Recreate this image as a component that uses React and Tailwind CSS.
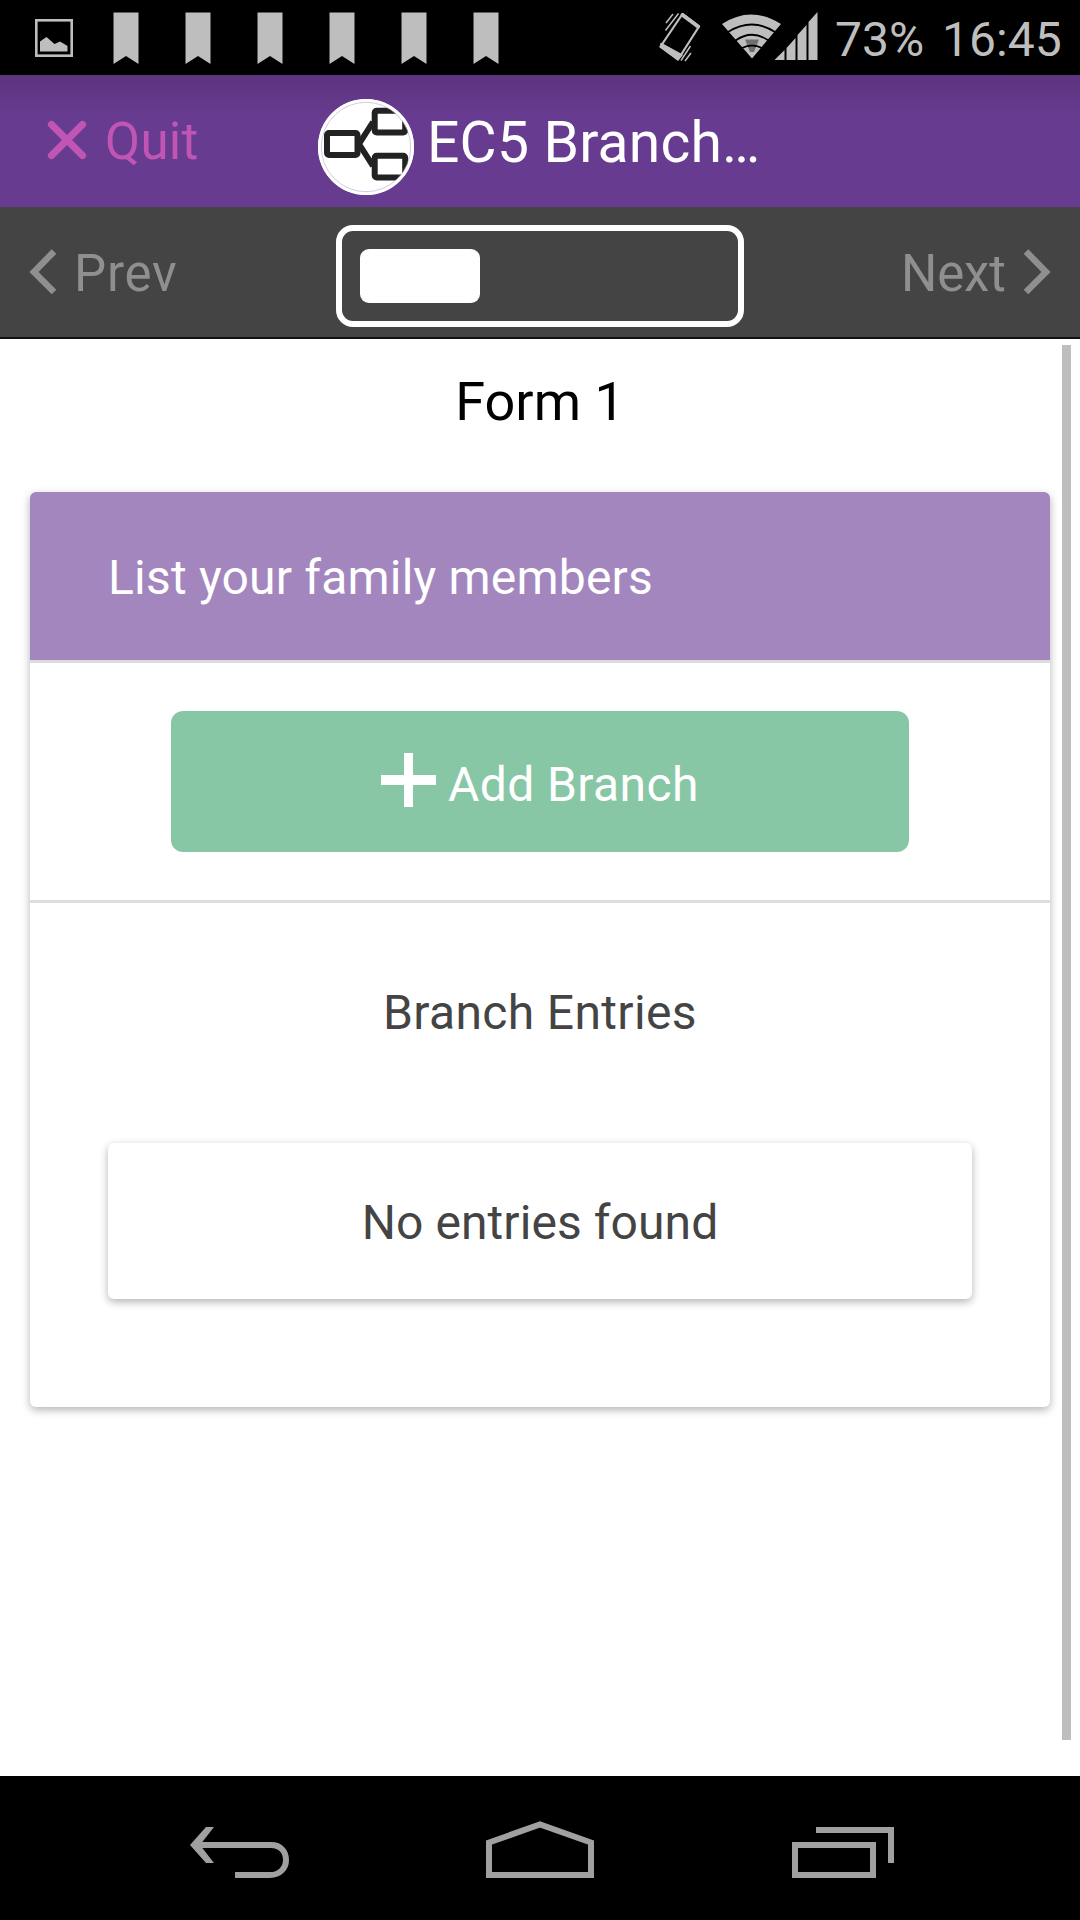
const FLAGS = [0, 1, 2, 3, 4, 5];

function StatusBar() {
  return (
    <div className="flex h-[75px] shrink-0 items-start bg-black text-[#bebebe]">
      <svg className="mt-[19px] ml-[35px] h-[38px] w-[38px]" viewBox="0 0 38 38" fill="none">
        <rect x="1.3" y="1.3" width="35.4" height="35.4" stroke="currentColor" strokeWidth="2.6" />
        <path d="M5 32.5V22.5L11.5 18L19.5 25L25 22.5L32.5 27V32.5Z" fill="currentColor" />
      </svg>
      <div className="mt-[12px] ml-[40px] flex gap-[46px]">
        {FLAGS.map((n) => (
          <svg key={n} className="h-[54px] w-[26px]" viewBox="0 0 26 54">
            <path d="M0.5 0.5H25.5V52L13 44L0.5 52Z" fill="currentColor" />
          </svg>
        ))}
      </div>
      <svg className="mt-[12px] ml-[160px] h-[51px] w-[42px]" viewBox="0 0 42 51" fill="none" stroke="currentColor">
        <path d="M23.5 2L40 14.5L19 47.5L1.5 34.5Z" strokeWidth="2.2" strokeLinejoin="round" />
        <path d="M2 31.5L23 43L19 47.500L1.500 35Z" fill="currentColor" strokeWidth="1.500" strokeLinejoin="round" />
        <path d="M23.500 3L39 14.500" strokeWidth="4" strokeLinecap="round" />
        <path d="M7 11L14 2M6.500 18.500L19.500 1.500M26 49L32 41M22 48.500L31.500 34" strokeWidth="1.500" />
      </svg>
      <svg className="mt-[12px] ml-[21px] h-[50px] w-[97px]" viewBox="0 0 97 50" fill="none">
        <path d="M0 12Q29 -7 59 12L30 46.500Z" fill="currentColor" />
        <path d="M23 27.500H37L32 40H28Z" fill="#6f6f6f" />
        <path d="M6 20Q30 5 53 20M13.500 28.500Q30 17 46.500 28.500M20 36Q30 31 40 36" stroke="#000" strokeWidth="1.800" />
        <path d="M52.500 48L62.500 38V48ZM64.500 48V36L73.500 26V48ZM75.500 48V23L84.500 13V48ZM86.500 48V10L95.500 0V48Z" fill="currentColor" />
      </svg>
      <span className="mt-[12px] ml-[16px] text-[48px] leading-[56px]">73%</span>
      <span className="mt-[12px] ml-[18px] text-[48px] leading-[56px]">16:45</span>
    </div>
  );
}

function BranchLogo() {
  return (
    <svg className="h-[96px] w-[96px]" viewBox="0 0 96 96">
      <defs>
        <clipPath id="logo-disc">
          <circle cx="48" cy="48" r="45" />
        </clipPath>
      </defs>
      <circle cx="48" cy="48" r="48" fill="#fff" />
      <g clipPath="url(#logo-disc)" fill="none" stroke="#222" strokeWidth="6">
        <rect x="9" y="34" width="30.500" height="22" rx="2" />
        <rect x="56.700" y="11.700" width="30.500" height="21.800" rx="2" />
        <rect x="56.700" y="56.700" width="30.500" height="21.800" rx="2" />
        <path d="M55 23L41 45L55 67" />
      </g>
      <circle cx="48" cy="48" r="46.500" fill="none" stroke="#fff" strokeWidth="3" />
      <circle cx="48" cy="48" r="44.700" fill="none" stroke="#c3b1d3" strokeWidth="0.700" />
    </svg>
  );
}

function Header() {
  return (
    <header className="flex h-[132px] shrink-0 items-start bg-[#673b8f] bg-linear-to-b from-[#5b347e] to-[#673b8f] to-30%">
      <svg className="mt-[45px] ml-[47px] h-[40px] w-[40px]" viewBox="0 0 40 40" stroke="#c155b4" strokeWidth="7.200" strokeLinecap="round">
        <path d="M4.500 4.500L35.500 35.500M35.500 4.500L4.500 35.500" />
      </svg>
      <span className="mt-[37px] ml-[18px] w-[100px] text-[51px] leading-[60px] tracking-[0.3px] text-[#c155b4]">Quit</span>
      <div className="mt-[24px] ml-[113px]">
        <BranchLogo />
      </div>
      <h1 className="mt-[35px] ml-[13px] text-[57px] leading-[66px] tracking-[0.2px] whitespace-nowrap text-white">EC5 Branch…</h1>
    </header>
  );
}

function Toolbar() {
  return (
    <nav className="flex h-[132px] shrink-0 items-start border-b-2 border-[#111] bg-[#444] text-[51px] leading-[60px] text-[#8f8f8f]">
      <svg className="mt-[42px] ml-[29px] h-[46px] w-[28px]" viewBox="0 0 28 46" fill="none" stroke="currentColor" strokeWidth="6.500">
        <path d="M25 2.500L5 23L25 43" />
      </svg>
      <span className="mt-[37px] ml-[17px] w-[110px] tracking-[0.8px]">Prev</span>
      <div className="mt-[18px] ml-[152px] flex h-[102px] w-[408px] rounded-[17px] border-6 border-white p-[18px]">
        <div className="h-[54px] w-[120px] rounded-[9px] bg-white" />
      </div>
      <span className="mt-[37px] ml-[157px] w-[105px] tracking-[-0.2px]">Next</span>
      <svg className="mt-[42px] ml-[17px] h-[46px] w-[28px]" viewBox="0 0 28 46" fill="none" stroke="currentColor" strokeWidth="6.500">
        <path d="M3 2.500L23 23L3 43" />
      </svg>
    </nav>
  );
}

function Content() {
  return (
    <main className="flex h-[1437px] shrink-0 items-start bg-white">
      <div className="ml-[30px] w-[1020px]">
        <h2 className="mt-[33px] text-center text-[54px] leading-[60px] text-black">Form 1</h2>
        <section className="mt-[60px] flex h-[915px] flex-col overflow-visible rounded-[6px] text-[48px] leading-[57px] text-[#444] shadow-[0_3px_9px_rgba(0,0,0,0.3)]">
          <div className="h-[171px] shrink-0 rounded-t-[6px] border-b-3 border-[#ddd] bg-[#a386be]">
            <p className="mt-[57px] ml-[78px] tracking-[0.2px] text-white">List your family members</p>
          </div>
          <div className="flex h-[240px] shrink-0 justify-center border-b-3 border-[#ddd] pt-[48px]">
            <button className="flex h-[141px] w-[738px] items-start rounded-[12px] bg-[#88c7a6] text-white">
              <svg className="mt-[42px] ml-[210px] h-[54px] w-[55px]" viewBox="0 0 55 54" fill="#fff">
                <path d="M23 0H32V22H55V32H32V54H23V32H0V22H23Z" />
              </svg>
              <span className="mt-[45px] ml-[12px] tracking-[0.4px] whitespace-nowrap">Add Branch</span>
            </button>
          </div>
          <h3 className="mt-[81px] text-center tracking-[0.35px]">Branch Entries</h3>
          <div className="mx-[78px] mt-[102px] h-[156px] rounded-[6px] pt-[51px] text-center tracking-[0.08px] shadow-[0_3px_9px_rgba(0,0,0,0.3)]">No entries found</div>
        </section>
      </div>
      <div className="mt-[6px] ml-[12px] h-[1395px] w-[9px] bg-[#bebebe]" />
    </main>
  );
}

function NavBar() {
  return (
    <footer className="flex h-[144px] shrink-0 items-start bg-black text-[#a0a0a0]">
      <svg className="mt-[51px] ml-[190px] h-[51px] w-[99px]" viewBox="0 0 99 51" fill="none" stroke="currentColor" strokeWidth="6">
        <path d="M9 18H81C91 18 96 25 96 33C96 41 90 48 80 48H45" />
        <path d="M0 18L16 0H24L10 18L24 36H16Z" fill="currentColor" stroke="none" />
      </svg>
      <svg className="mt-[45px] ml-[197px] h-[57px] w-[108px]" viewBox="0 0 108 57" fill="none" stroke="currentColor" strokeWidth="6">
        <path d="M3 54V21.500L54 3.500L105 21.500V54Z" />
      </svg>
      <svg className="mt-[51px] ml-[198px] h-[51px] w-[102px]" viewBox="0 0 102 51" fill="none" stroke="currentColor" strokeWidth="6">
        <path d="M3 18H81V48H3ZM24 3H99V36" />
      </svg>
    </footer>
  );
}

export default function App() {
  return (
    <div className="flex h-[1920px] w-[1080px] flex-col overflow-hidden bg-white font-[Roboto,sans-serif]">
      <StatusBar />
      <Header />
      <Toolbar />
      <Content />
      <NavBar />
    </div>
  );
}
